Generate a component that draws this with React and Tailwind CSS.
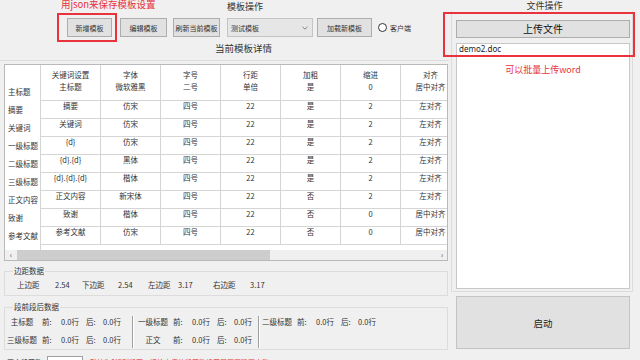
import React from "react";

const cols = ["关键词设置", "字体", "字号", "行距", "加粗", "缩进", "对齐"];
const first = ["主标题", "微软雅黑", "二号", "单倍", "是", "0", "居中对齐"];
const rows = [
  ["摘要", "仿宋", "四号", "22", "是", "2", "左对齐"],
  ["关键词", "仿宋", "四号", "22", "是", "2", "左对齐"],
  ["{d}", "仿宋", "四号", "22", "是", "2", "左对齐"],
  ["{d}.{d}", "黑体", "四号", "22", "是", "2", "左对齐"],
  ["{d}.{d}.{d}", "楷体", "四号", "22", "是", "2", "左对齐"],
  ["正文内容", "新宋体", "四号", "22", "否", "2", "左对齐"],
  ["致谢", "楷体", "四号", "22", "否", "0", "居中对齐"],
  ["参考文献", "仿宋", "四号", "22", "否", "0", "居中对齐"],
];
const rowHeads = ["主标题", "摘要", "关键词", "一级标题", "二级标题", "三级标题", "正文内容", "致谢", "参考文献"];

function Btn({ children, className = "" }) {
  return (
    <div className={"h-[19px] border border-[#adadad] bg-[#e1e1e1] flex items-center justify-center text-[7px] leading-[10px] text-[#333] shrink-0 " + className}>
      {children}
    </div>
  );
}

function Spacing({ label }) {
  return (
    <div className="flex items-center h-[18px]">
      <span className="w-[32px] text-center">{label}</span>
      <span className="ml-[4px] w-[19px]">前:</span>
      <span className="w-[25px]">0.0行</span>
      <span className="w-[17px]">后:</span>
      <span>0.0行</span>
    </div>
  );
}

function Sep() {
  return <div className="w-[2px] h-[32px] mt-[3px] border-l border-[#a0a0a0] border-r border-r-white shrink-0" />;
}

export default function App() {
  return (
    <div className="w-[640px] h-[360px] overflow-hidden bg-[#f0f0f0] flex font-['Noto_Sans_CJK_SC','Noto_Sans',sans-serif] text-[#222]">
      {/* LEFT */}
      <div className="w-[449px] shrink-0 flex flex-col [&>*]:shrink-0">
        {/* top annotation + title */}
        <div className="h-[18px] flex items-start">
          <span className="ml-[61px] w-[166px] -mt-[1px] text-[9.5px] leading-[10px] text-[#e8323c]">用json来保存模板设置</span>
          <span className="mt-[1px] text-[9px] leading-[12px] text-[#333]">模板操作</span>
        </div>
        {/* buttons */}
        <div className="h-[19px] flex items-center pl-[67px]">
          <div className="relative">
            <Btn className="w-[45px]">新增模板</Btn>
            <div className="absolute -left-[10px] -right-[5px] -top-[5px] -bottom-[5px] border-2 border-[#e8323c]" />
          </div>
          <Btn className="w-[47px] ml-[8px]">编辑模板</Btn>
          <Btn className="w-[47px] ml-[6px]">刷新当前模板</Btn>
          <div className="w-[86px] ml-[7px] h-[19px] border border-[#c4c4c4] bg-[#e6e6e6] flex items-center justify-between pl-[3px] pr-[4px] text-[7px] leading-[10px] text-[#333]">
            <span>测试模板</span>
            <svg width="6" height="4" viewBox="0 0 6 4"><path d="M0.5 0.8 L3 3.2 L5.5 0.8" fill="none" stroke="#666" strokeWidth="0.8" /></svg>
          </div>
          <Btn className="w-[55px] ml-[4px]">加载新模板</Btn>
          <div className="ml-[6px] w-[9px] h-[9px] rounded-full border border-[#333] bg-white" />
          <span className="ml-[3px] text-[7px] leading-[10px] text-[#333]">客户端</span>
        </div>
        {/* subtitle */}
        <div className="h-[23px]">
          <div className="ml-[215px] mt-[5px] text-[9.5px] leading-[12px] text-[#333]">当前模板详情</div>
        </div>
        {/* table */}
        <div className="border-t border-[#dcdcdc] pt-[3px]">
          <div className="ml-[4px] w-[444px] h-[197px] border border-[#b9b9b9] bg-white flex flex-col text-[7.5px] text-[#333]">
            <div className="flex flex-1 min-h-0 overflow-hidden">
              <div className="w-[35px] shrink-0 pt-[18px] flex flex-col">
                {rowHeads.map((r) => (
                  <div key={r} className="h-[18px] shrink-0 flex items-center pl-[3px] leading-[10px] whitespace-nowrap">{r}</div>
                ))}
              </div>
              <div className="flex-1 overflow-hidden border-l border-[#d5d5d5]">
                <div className="w-[420px] flex flex-col">
                  <div className="h-[36px] shrink-0 flex border-b border-[#d5d5d5]">
                    {cols.map((c, i) => (
                      <div key={c} className="w-[60px] shrink-0 border-r border-[#d5d5d5] pt-[4px] text-center leading-[12px]">
                        <div>{c}</div>
                        <div>{first[i]}</div>
                      </div>
                    ))}
                  </div>
                  {rows.map((r, ri) => (
                    <div key={ri} className="h-[18px] shrink-0 flex border-b border-[#d5d5d5]">
                      {r.map((c, i) => (
                        <div key={i} className="w-[60px] shrink-0 border-r border-[#d5d5d5] text-center leading-[10px] whitespace-nowrap">{c}</div>
                      ))}
                    </div>
                  ))}
                </div>
              </div>
            </div>
            {/* scrollbar */}
            <div className="h-[10px] flex bg-[#f0f0f0] text-[#555] shrink-0">
              <div className="w-[12px] flex items-center justify-center text-[8px] leading-[10px]">‹</div>
              <div className="w-[253px] bg-[#cdcdcd]" />
              <div className="flex-1" />
              <div className="w-[10px] flex items-center justify-center text-[8px] leading-[10px]">›</div>
            </div>
          </div>
        </div>
        {/* margins */}
        <fieldset className="ml-[4px] w-[444px] mt-[4px] border border-[#dcdcdc] text-[7.5px] text-[#333]">
          <legend className="ml-[8px] px-[1px] leading-[12px]">边距数据</legend>
          <div className="h-[16px] flex items-center pl-[12px] leading-[10px]">
            <span className="w-[38px]">上边距</span>
            <span className="w-[27px]">2.54</span>
            <span className="w-[36px]">下边距</span>
            <span className="w-[30px]">2.54</span>
            <span className="w-[30px]">左边距</span>
            <span className="w-[35px]">3.17</span>
            <span className="w-[37px]">右边距</span>
            <span>3.17</span>
          </div>
          <div className="h-[2px]" />
        </fieldset>
        <fieldset className="ml-[4px] w-[444px] mt-[5px] border border-[#dcdcdc] text-[7.5px] text-[#333]">
          <legend className="ml-[8px] px-[1px] leading-[12px]">段前段后数据</legend>
          <div className="flex pl-[1px] leading-[10px]">
            <div className="w-[126px] flex flex-col">
              <Spacing label="主标题" />
              <Spacing label="三级标题" />
            </div>
            <Sep />
            <div className="ml-[3px] w-[121px] flex flex-col">
              <Spacing label="一级标题" />
              <Spacing label="正文" />
            </div>
            <Sep />
            <div className="ml-[1px] flex flex-col">
              <Spacing label="二级标题" />
            </div>
          </div>
        </fieldset>
        {/* bottom row */}
        <div className="flex items-start mt-[2px] text-[7px] leading-[10px]">
          <span className="ml-[7px] mt-[5px] w-[40px]">正文段落数</span>
          <div className="mt-[4px] w-[36px] h-[14px] bg-white border border-[#a0a0a0] shrink-0" />
          <span className="ml-[7px] mt-[5px] text-[#e8323c] whitespace-nowrap">默认为0识别段落，请检查您的段落数设置是否正确再启动</span>
        </div>
      </div>

      {/* RIGHT */}
      <div className="relative flex-1 flex flex-col [&>*]:shrink-0">
        <div className="h-[11px] text-center text-[9px] leading-[11px] text-[#333]">文件操作</div>
        <div className="ml-[2px] w-[182px] h-[281px] border-x border-b border-[#dcdcdc] pl-[4px] pr-[2px] pt-[9px] pb-[2px] flex flex-col">
          <div className="h-[18px] shrink-0 border border-[#adadad] bg-[#e1e1e1] flex items-center justify-center text-[10px] leading-[12px] text-[#111]">上传文件</div>
          <div className="mt-[5px] flex-1 bg-white border border-[#c8c8c8]">
            <div className="pl-[2px] text-[8px] leading-[10px] text-[#222] font-['Noto_Sans',sans-serif]">demo2.doc</div>
            <div className="mt-[10px] text-center text-[9px] leading-[12px] text-[#e8323c]">可以批量上传word</div>
          </div>
        </div>
        <div className="mt-[4px] ml-[7px] w-[174px] h-[53px] border border-[#c4c4c4] bg-[#e1e1e1] flex items-center justify-center text-[9.5px] leading-[12px] text-[#222]">启动</div>
        <div className="absolute -left-[6px] top-[12px] w-[192px] h-[45px] border-2 border-[#e8323c]" />
      </div>
    </div>
  );
}
